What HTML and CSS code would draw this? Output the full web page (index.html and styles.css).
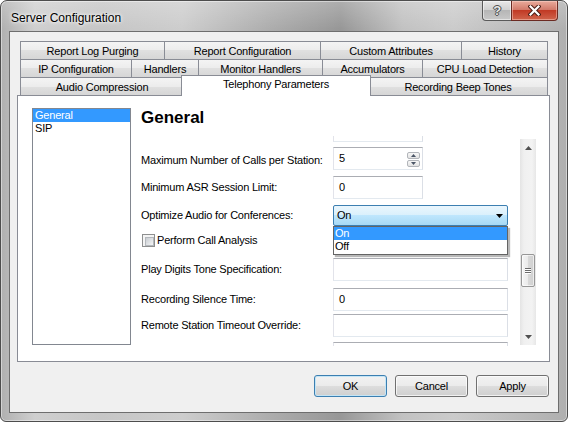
FILE: index.html
```html
<!DOCTYPE html>
<html>
<head>
<meta charset="utf-8">
<title>Server Configuration</title>
<link rel="stylesheet" href="styles.css">
</head>
<body>
<div class="window">
  <div class="titlebar">
    <div class="title">Server Configuration</div>
    <div class="caption">
      <div class="cbtn help"><span>?</span></div>
      <div class="cbtn close">
        <svg width="13" height="11" viewBox="0 0 13 11">
          <path d="M2.5 1.5 L10.5 9.5 M10.5 1.5 L2.5 9.5" stroke="#4a1d16" stroke-width="4.2" stroke-linecap="square" fill="none"/>
          <path d="M2.5 1.5 L10.5 9.5 M10.5 1.5 L2.5 9.5" stroke="#ffffff" stroke-width="2.2" stroke-linecap="square" fill="none"/>
        </svg>
      </div>
    </div>
  </div>
  <div class="client">
    <div class="tabs">
      <div class="tabrow r1">
        <div class="tab">Report Log Purging</div>
        <div class="tab">Report Configuration</div>
        <div class="tab">Custom Attributes</div>
        <div class="tab">History</div>
      </div>
      <div class="tabrow r2">
        <div class="tab">IP Configuration</div>
        <div class="tab">Handlers</div>
        <div class="tab">Monitor Handlers</div>
        <div class="tab">Accumulators</div>
        <div class="tab">CPU Load Detection</div>
      </div>
      <div class="tabrow r3">
        <div class="tab">Audio Compression</div>
        <div class="tab selected">Telephony Parameters</div>
        <div class="tab">Recording Beep Tones</div>
      </div>
    </div>
    <div class="panel">
      <div class="listbox">
        <div class="item sel">General</div>
        <div class="item">SIP</div>
      </div>
      <div class="main">
        <h1 class="heading">General</h1>
        <div class="scroller">
          <div class="form">
            <div class="row first"><span class="lbl"></span><div class="field short"></div></div>
            <div class="row m5"><span class="lbl low">Maximum Number of Calls per Station:</span>
              <div class="field short spinfield"><span>5</span>
                <div class="spin">
                  <span class="sbtn"><svg width="5" height="3" viewBox="0 0 5 3"><polygon points="0,3 2.5,0 5,3" fill="#4a5566"/></svg></span>
                  <span class="sbtn"><svg width="5" height="3" viewBox="0 0 5 3"><polygon points="0,0 2.5,3 5,0" fill="#4a5566"/></svg></span>
                </div>
              </div>
            </div>
            <div class="row m6"><span class="lbl">Minimum ASR Session Limit:</span><div class="field short">0</div></div>
            <div class="row m6"><span class="lbl">Optimize Audio for Conferences:</span>
              <div class="combo"><span>On</span>
                <svg width="7" height="4" viewBox="0 0 7 4"><polygon points="0,0 7,0 3.5,4" fill="#000"/></svg>
                <div class="droplist">
                  <div class="opt sel">On</div>
                  <div class="opt">Off</div>
                </div>
              </div>
            </div>
            <div class="row m6 chkrow"><span class="chk"></span><span class="chklbl">Perform Call Analysis</span></div>
            <div class="row m10"><span class="lbl">Play Digits Tone Specification:</span><div class="field long"></div></div>
            <div class="row m7"><span class="lbl">Recording Silence Time:</span><div class="field long">0</div></div>
            <div class="row m3"><span class="lbl">Remote Station Timeout Override:</span><div class="field long"></div></div>
            <div class="row m5"><span class="lbl"></span><div class="field long"></div></div>
          </div>
          <div class="vscroll">
            <div class="sbarrow"><svg width="7" height="4" viewBox="0 0 7 4"><polygon points="0,4 3.5,0 7,4" fill="#505050"/></svg></div>
            <div class="track">
              <div class="thumb"><span class="grip"></span><span class="grip"></span><span class="grip"></span></div>
            </div>
            <div class="sbarrow"><svg width="7" height="4" viewBox="0 0 7 4"><polygon points="0,0 7,0 3.5,4" fill="#505050"/></svg></div>
          </div>
        </div>
      </div>
    </div>
    <div class="buttons">
      <div class="btn default">OK</div>
      <div class="btn">Cancel</div>
      <div class="btn">Apply</div>
    </div>
  </div>
</div>
</body>
</html>
```

FILE: styles.css
```css
* { box-sizing: border-box; }
html, body { margin: 0; padding: 0; background: #ffffff; }
body {
  font-family: "Liberation Sans", Arial, sans-serif;
  font-size: 11px;
  color: #000;
  letter-spacing: -0.2px;
}

.window {
  width: 568px;
  height: 422px;
  border: 1px solid #4d4d4d;
  border-radius: 7px 7px 6px 6px;
  background:
    linear-gradient(180deg, rgba(255,255,255,0.22) 0, rgba(255,255,255,0) 28px),
    linear-gradient(90deg, #b0b0b0 0%, #cfcfcf 6%, #c6c6c6 18%, #cdcdcd 32%, #acacac 48%, #979797 60%, #c2c2c2 71%, #cbcbcb 80%, #afafaf 100%);
  padding: 0 8px 8px 8px;
  display: flex;
  flex-direction: column;
  box-shadow: inset 0 0 0 1px rgba(255,255,255,0.45);
}

.titlebar {
  height: 30px;
  margin: 0 -8px;
  display: flex;
  justify-content: space-between;
  align-items: flex-start;
}
.title {
  padding: 10px 0 0 10px;
  font-size: 12px;
  line-height: 15px;
  letter-spacing: 0;
  text-shadow: 0 0 5px #fff, 0 0 3px #fff;
}
.caption { display: flex; margin-right: 9px; }
.cbtn {
  height: 20px;
  display: flex;
  align-items: center;
  justify-content: center;
  border: 1px solid #5a5a5a;
  border-top: none;
}
.help {
  width: 29px;
  border-right: none;
  border-radius: 0 0 0 4px;
  background: linear-gradient(#e8e8e8, #d2d2d2 45%, #b6b6b6 50%, #c8c8c8);
  box-shadow: inset 0 0 0 1px rgba(255,255,255,0.5);
}
.help span {
  font-weight: bold;
  font-size: 13px;
  color: #e9e9e9;
  line-height: 14px;
  text-shadow: 0 0 1px #333, 1px 0 0 #555, -1px 0 0 #555, 0 1px 0 #555, 0 -1px 0 #555;
}
.close {
  width: 47px;
  border-color: #6b2a22;
  border-radius: 0 0 4px 0;
  background: linear-gradient(#e9ab9c, #d27b6b 45%, #c13a25 50%, #d0644c);
  box-shadow: inset 0 0 0 1px rgba(255,220,210,0.45);
}

.client {
  flex: 1;
  background: #f0f0f0;
  border: 1px solid #6e6e6e;
  padding: 9px 8px 0 7px;
  display: flex;
  flex-direction: column;
}

/* tabs */
.tabs { margin: 0 2px 0 3px; position: relative; z-index: 1; }
.tabrow { display: flex; height: 18px; }
.tab {
  flex: none;
  height: 19px;
  margin-right: -1px;
  border: 1px solid #898c95;
  background: linear-gradient(#f4f4f4, #ececec 50%, #e0e0e0 50%, #d6d6d6);
  text-align: center;
  padding-top: 3px;
  line-height: 13px;
  white-space: nowrap;
}
.r1 .tab:nth-child(1) { width: 145px; }
.r1 .tab:nth-child(2) { width: 157px; }
.r1 .tab:nth-child(3) { width: 142px; }
.r1 .tab:nth-child(4) { width: 87px; }
.r2 .tab:nth-child(1) { width: 112px; }
.r2 .tab:nth-child(2) { width: 68px; }
.r2 .tab:nth-child(3) { width: 125px; }
.r2 .tab:nth-child(4) { width: 101px; }
.r2 .tab:nth-child(5) { width: 126px; }
.r3 .tab:nth-child(1) { width: 164px; }
.r3 .tab:nth-child(3) { width: 180px; }
.tab.selected {
  width: 190px;
  height: 21px;
  margin: -2px -3px 0 -2px;
  background: #fff;
  border-bottom: none;
  position: relative;
  z-index: 2;
  padding-top: 2px;
}

/* panel */
.panel {
  height: 267px;
  background: #fff;
  border: 1px solid #898c95;
  display: flex;
  padding: 12px 13px 0 14px;
}
.listbox {
  width: 99px;
  height: 237px;
  flex: none;
  border: 1px solid #828790;
  background: #fff;
}
.item { line-height: 13px; padding-left: 2px; }
.item.sel { background: #3399ff; color: #fff; }

.main { flex: 1; margin-left: 10px; display: flex; flex-direction: column; min-width: 0; }
.heading {
  margin: 0;
  font-size: 17px;
  line-height: 20px;
  font-weight: bold;
  letter-spacing: 0;
}
.scroller { display: flex; height: 210px; margin-top: 8px; }
.form { flex: 1; overflow: hidden; min-width: 0; }

.row { display: flex; align-items: center; }
.row.first { margin-top: -17px; }
.m3 { margin-top: 3px; }
.m5 { margin-top: 5px; }
.m6 { margin-top: 6px; }
.m7 { margin-top: 7px; }
.m10 { margin-top: 10px; }
.lbl { width: 192px; flex: none; line-height: 13px; }
.lbl.low { padding-top: 4px; }

.field {
  height: 23px;
  flex: none;
  border: 1px solid;
  border-color: #abadb3 #dbdfe6 #e3e9ef #e2e3ea;
  background: #fff;
  padding: 4px 0 0 5px;
  line-height: 13px;
}
.short { width: 90px; }
.long { width: 175px; }

.spinfield { display: flex; justify-content: space-between; align-items: flex-start; padding-right: 2px; }
.spin { display: flex; flex-direction: column; gap: 1px; }
.sbtn {
  width: 13px;
  height: 7px;
  border: 1px solid #b2b5ba;
  border-radius: 2px;
  background: linear-gradient(#f7f7f7, #e3e3e3);
  display: flex;
  align-items: center;
  justify-content: center;
}
.sbtn svg { display: block; }

.combo {
  width: 175px;
  height: 21px;
  flex: none;
  border: 1px solid #3c7fb1;
  border-radius: 2px;
  background: linear-gradient(#eaf6fd, #d9f0fc 50%, #bee6fd 50%, #a7d9f5);
  display: flex;
  align-items: center;
  justify-content: space-between;
  padding: 0 4px 0 3px;
  position: relative;
  line-height: 13px;
}
.combo > svg { display: block; }
.droplist {
  position: absolute;
  left: -1px;
  top: calc(100% + 1px);
  width: 175px;
  border: 1px solid #646464;
  background: #fff;
  padding-bottom: 1px;
  box-shadow: 2px 2px 1px rgba(0,0,0,0.28);
  z-index: 5;
}
.opt { line-height: 13px; padding-left: 1px; }
.opt.sel { background: #3399ff; color: #fff; }

.chkrow { height: 16px; padding-left: 1px; }
.chk {
  width: 13px;
  height: 13px;
  flex: none;
  border: 1px solid #8e8f8f;
  background: #f4f4f4;
  padding: 2px;
}
.chk::after {
  content: "";
  display: block;
  width: 7px;
  height: 7px;
  border: 1px solid #b4b8bd;
  background: linear-gradient(135deg, #c9cdd2, #f4f5f6);
}
.chklbl { margin-left: 2px; line-height: 13px; }

/* scrollbar */
.vscroll {
  width: 16px;
  flex: none;
  margin: 3px 0 1px 0;
  background: linear-gradient(90deg, #e4e4e4, #f0f0f0 25%, #f3f3f3 75%, #e7e7e7);
  display: flex;
  flex-direction: column;
}
.sbarrow { height: 17px; display: flex; align-items: center; justify-content: center; }
.sbarrow svg { display: block; }
.track { flex: 1; padding-top: 98px; display: flex; justify-content: center; }
.thumb {
  width: 14px;
  height: 33px;
  border: 1px solid #979797;
  border-radius: 2px;
  background: linear-gradient(90deg, #f5f5f5, #eaeaea 50%, #d9d9d9 50%, #d0d0d0);
  box-shadow: inset 0 0 0 1px rgba(255,255,255,0.6);
  display: flex;
  flex-direction: column;
  align-items: center;
  justify-content: center;
  gap: 1px;
}
.grip { width: 6px; height: 1px; background: #6a6a6a; box-shadow: 0 1px 0 #fff; }

/* dialog buttons */
.buttons {
  display: flex;
  justify-content: flex-end;
  gap: 8px;
  margin-top: 13px;
  padding-right: 1px;
}
.btn {
  width: 73px;
  height: 22px;
  border: 1px solid #707070;
  border-radius: 3px;
  background: linear-gradient(#f2f2f2, #ebebeb 50%, #dddddd 50%, #cfcfcf);
  box-shadow: inset 0 0 0 1px rgba(255,255,255,0.7);
  display: flex;
  align-items: center;
  justify-content: center;
  line-height: 13px;
}
.btn.default {
  border-color: #3c7fb1;
  box-shadow: inset 0 0 0 1px #c4e5f6;
}
```
